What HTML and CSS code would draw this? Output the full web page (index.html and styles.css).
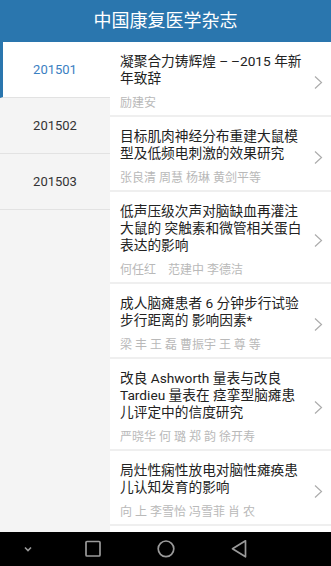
FILE: index.html
```html
<!DOCTYPE html>
<html lang="zh-CN">
<head>
<meta charset="utf-8">
<title>中国康复医学杂志</title>
<link rel="stylesheet" href="styles.css">
</head>
<body>
<div class="app">
  <header class="topbar"><h1 class="topbar-title">中国康复医学杂志</h1></header>
  <main class="content">
    <nav class="issues">
      <div class="issue issue-active">201501</div>
      <div class="issue">201502</div>
      <div class="issue">201503</div>
    </nav>
    <ul class="articles">
      <li class="article">
        <div class="article-body">
          <p class="article-title">凝聚合力铸辉煌 –&thinsp;–2015 年新年致辞</p>
          <p class="article-authors">励建安</p>
        </div>
        <svg class="chev" width="21" height="13" viewBox="0 0 21 13"><path d="M9 0.5 L15.5 6.5 L9 12.5" fill="none" stroke="#acacac" stroke-width="1.2"/></svg>
      </li>
      <li class="article">
        <div class="article-body">
          <p class="article-title">目标肌肉神经分布重建大鼠模型及低频电刺激的效果研究</p>
          <p class="article-authors">张良清 周慧 杨琳 黄剑平等</p>
        </div>
        <svg class="chev" width="21" height="13" viewBox="0 0 21 13"><path d="M9 0.5 L15.5 6.5 L9 12.5" fill="none" stroke="#acacac" stroke-width="1.2"/></svg>
      </li>
      <li class="article">
        <div class="article-body">
          <p class="article-title">低声压级次声对脑缺血再灌注大鼠的 突触素和微管相关蛋白表达的影响</p>
          <p class="article-authors">何任红　范建中 李德洁</p>
        </div>
        <svg class="chev" width="21" height="13" viewBox="0 0 21 13"><path d="M9 0.5 L15.5 6.5 L9 12.5" fill="none" stroke="#acacac" stroke-width="1.2"/></svg>
      </li>
      <li class="article">
        <div class="article-body">
          <p class="article-title">成人脑瘫患者 6 分钟步行试验步行距离的 影响因素*</p>
          <p class="article-authors">梁 丰 王 磊 曹振宇 王 尊 等</p>
        </div>
        <svg class="chev" width="21" height="13" viewBox="0 0 21 13"><path d="M9 0.5 L15.5 6.5 L9 12.5" fill="none" stroke="#acacac" stroke-width="1.2"/></svg>
      </li>
      <li class="article">
        <div class="article-body">
          <p class="article-title">改良 Ashworth 量表与改良 Tardieu 量表在 痉挛型脑瘫患儿评定中的信度研究</p>
          <p class="article-authors">严晓华 何 璐 郑 韵 徐开寿</p>
        </div>
        <svg class="chev" width="21" height="13" viewBox="0 0 21 13"><path d="M9 0.5 L15.5 6.5 L9 12.5" fill="none" stroke="#acacac" stroke-width="1.2"/></svg>
      </li>
      <li class="article">
        <div class="article-body">
          <p class="article-title">局灶性痫性放电对脑性瘫痪患儿认知发育的影响</p>
          <p class="article-authors">向 上 李雪怡 冯雪菲 肖 农</p>
        </div>
        <svg class="chev" width="21" height="13" viewBox="0 0 21 13"><path d="M9 0.5 L15.5 6.5 L9 12.5" fill="none" stroke="#acacac" stroke-width="1.2"/></svg>
      </li>
    </ul>
  </main>
  <footer class="navbar">
    <div class="nav-slot">
      <svg width="20" height="20" viewBox="0 0 20 20"><path d="M7 8.5 L10 11.5 L13 8.5" fill="none" stroke="#9a9a9a" stroke-width="1.6"/></svg>
    </div>
    <div class="nav-slot">
      <svg width="20" height="20" viewBox="0 0 20 20"><rect x="3" y="2.5" width="14" height="14.5" rx="1" fill="none" stroke="#9a9a9a" stroke-width="1.7"/></svg>
    </div>
    <div class="nav-slot">
      <svg width="20" height="20" viewBox="0 0 20 20"><circle cx="10" cy="9.8" r="7.8" fill="none" stroke="#9a9a9a" stroke-width="1.7"/></svg>
    </div>
    <div class="nav-slot">
      <svg width="20" height="20" viewBox="0 0 20 20"><path d="M16.5 1.8 L16.5 17.8 L3.5 9.8 Z" fill="none" stroke="#9a9a9a" stroke-width="1.7" stroke-linejoin="round"/></svg>
    </div>
  </footer>
</div>
</body>
</html>
```

FILE: styles.css
```css
html, body {
  margin: 0;
  padding: 0;
  height: 100%;
  overflow: hidden;
}

body {
  font-family: Roboto, "Noto Sans CJK SC", "Noto Sans", sans-serif;
  background: #ffffff;
  color: #222222;
}

.app {
  display: flex;
  flex-direction: column;
  height: 566px;
}

.topbar {
  height: 42px;
  flex: 0 0 42px;
  background: #2a76ae;
  display: flex;
  align-items: center;
  justify-content: center;
}

.topbar-title {
  margin: 0;
  font-size: 18px;
  font-weight: normal;
  color: #ffffff;
  line-height: 22px;
}

.content {
  flex: 1 1 auto;
  display: flex;
  min-height: 0;
  overflow: hidden;
}

.issues {
  width: 110px;
  flex: 0 0 110px;
  background: #f4f4f4;
  display: flex;
  flex-direction: column;
}

.issue {
  height: 55px;
  border-bottom: 1px solid #e2e2e2;
  display: flex;
  align-items: center;
  justify-content: center;
  font-size: 13px;
  color: #333333;
}

.issue-active {
  background: #ffffff;
  color: #3a80c2;
  border-left: 3px solid #2a76ae;
  padding-right: 3px;
}

.articles {
  list-style: none;
  margin: 0;
  padding: 0;
  flex: 1 1 auto;
  background: #ffffff;
}

.article {
  display: flex;
  align-items: center;
  padding: 11px 4px 4px 10px;
  border-bottom: 2px solid #efefef;
}

.article-body {
  flex: 1 1 auto;
  min-width: 0;
}

.article-title {
  margin: 0;
  font-size: 13.7px;
  line-height: 17px;
  color: #222222;
}

.article-authors {
  margin: 8px 0 0;
  font-size: 12px;
  line-height: 16px;
  color: #b9b9b9;
}

.chev {
  flex: 0 0 21px;
  display: block;
}

.navbar {
  height: 34px;
  flex: 0 0 34px;
  background: #000000;
  display: grid;
  grid-template-columns: 56px 73px 73px 73px;
  align-items: center;
}

.nav-slot {
  display: flex;
  justify-content: center;
  align-items: center;
}

.nav-slot svg {
  display: block;
}
```
